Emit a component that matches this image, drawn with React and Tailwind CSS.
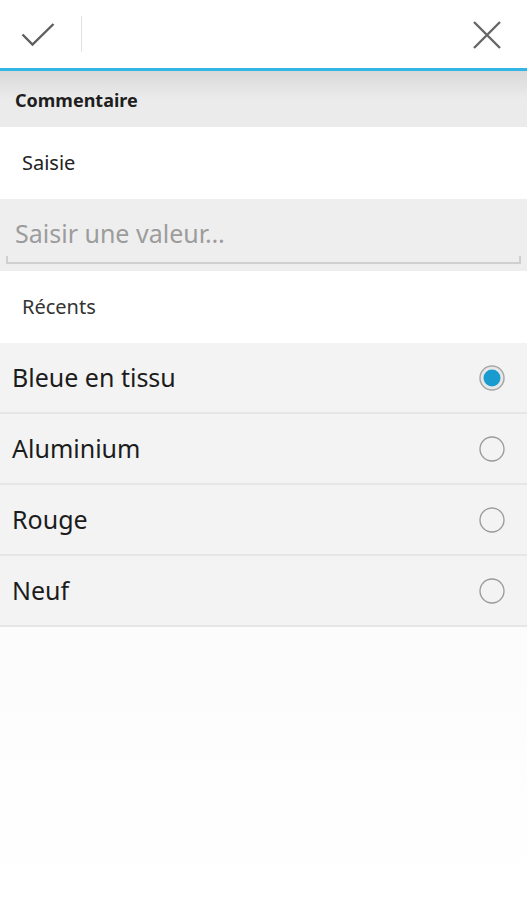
import React from 'react'

function Radio({ checked }) {
  return (
    <svg width="28" height="28" viewBox="0 0 28 28">
      {checked ? (
        <>
          <circle cx="14" cy="14" r="12" fill="#e8e8e8" stroke="#a8a8a8" strokeWidth="1.5" />
          <circle cx="14" cy="14" r="8.5" fill="#1a9bd0" />
        </>
      ) : (
        <circle cx="14" cy="14" r="12" fill="none" stroke="#9a9a9a" strokeWidth="1.3" />
      )}
    </svg>
  )
}

const items = [
  { label: 'Bleue en tissu', checked: true },
  { label: 'Aluminium' },
  { label: 'Rouge' },
  { label: 'Neuf' },
]

export default function App() {
  return (
    <div className="w-[527px] h-[900px] flex flex-col bg-gradient-to-b from-[#f4f4f4] to-white overflow-hidden" style={{ fontFamily: '"Noto Sans", "Open Sans", sans-serif' }}>
      {/* action bar */}
      <div className="h-[68px] bg-white flex items-center shrink-0">
        <button className="w-[81px] h-full flex items-center justify-center">
          <svg width="36" height="26" viewBox="0 0 36 26" className="ml-[-3px] mt-[3px]">
            <path d="M1.5 11.5 L11.5 21.5 L32.5 1" fill="none" stroke="#5f5f5f" strokeWidth="2.4" />
          </svg>
        </button>
        <div className="w-px h-[36px] bg-[#e2e2e2]" />
        <div className="flex-1" />
        <button className="w-[80px] h-full flex items-center justify-center">
          <svg width="28" height="28" viewBox="0 0 28 28" className="mt-[1px]">
            <path d="M1 1 L27 27 M27 1 L1 27" fill="none" stroke="#666" strokeWidth="2.4" />
          </svg>
        </button>
      </div>
      <div className="h-[3px] bg-[#33b5e5] shrink-0" />

      {/* section header */}
      <div className="h-[56px] shrink-0 flex items-center px-[15px] bg-gradient-to-b from-[#d9d9d9] via-[#ebebeb] to-[#ebebeb]">
        <span className="text-[18px] font-bold text-[#1e1e1e] mt-[2px]">Commentaire</span>
      </div>

      <div className="h-[72px] shrink-0 bg-white flex items-center px-[22px]">
        <span className="text-[20px] text-[#222]">Saisie</span>
      </div>

      <div className="h-[72px] shrink-0 bg-[#eeeeee] px-[6px] pt-[14px]">
        <div className="h-[51px] border-b-[2px] border-[#cfcfcf] flex items-start pl-[9px] relative">
          <span className="text-[25px] text-[#9c9c9c] leading-[40px]">Saisir une valeur…</span>
          <span className="absolute left-0 bottom-0 w-[2px] h-[6px] bg-[#cfcfcf]" />
          <span className="absolute right-0 bottom-0 w-[2px] h-[6px] bg-[#cfcfcf]" />
        </div>
      </div>

      <div className="h-[72px] shrink-0 bg-white flex items-center px-[22px]">
        <span className="text-[20px] text-[#333]">Récents</span>
      </div>

      {items.map((it) => (
        <div key={it.label} className="h-[71px] shrink-0 bg-[#f3f3f3] border-b-[2px] border-[#e6e6e6] flex items-center justify-between pl-[12px] pr-[21px]">
          <span className="text-[25px] text-[#1c1c1c]">{it.label}</span>
          <Radio checked={it.checked} />
        </div>
      ))}

      <div className="flex-1" />
    </div>
  )
}
